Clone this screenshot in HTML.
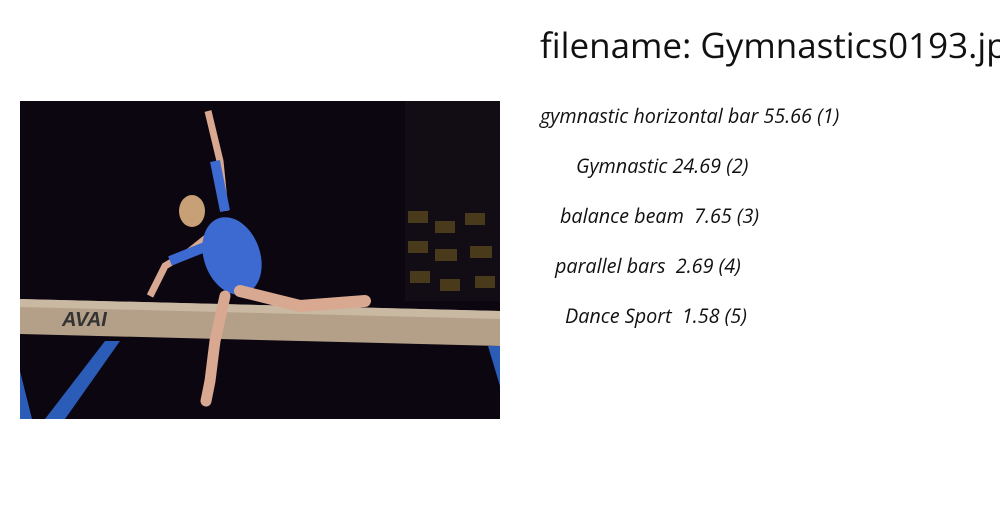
<!DOCTYPE html>
<html><head><meta charset="utf-8"><style>
body{margin:0;width:1000px;height:520px;background:#fff;overflow:hidden;position:relative;font-family:"Open Sans","DejaVu Sans","Liberation Sans",sans-serif;color:#111}
h1{position:absolute;left:540px;top:22px;margin:0;font-weight:normal;font-size:35px;white-space:nowrap}
.l{position:absolute;font-style:italic;font-size:19.8px;white-space:nowrap}
svg{position:absolute;left:20px;top:101px}
</style></head><body>
<svg width="480" height="318" viewBox="0 0 480 318">
<rect width="480" height="318" fill="#0c0610"/>
<rect x="385" y="0" width="95" height="200" fill="#120c15"/>
<g fill="#4a3a1c">
<rect x="388" y="110" width="20" height="12"/><rect x="415" y="120" width="20" height="12"/><rect x="445" y="112" width="20" height="12"/>
<rect x="388" y="140" width="20" height="12"/><rect x="415" y="148" width="22" height="12"/><rect x="450" y="145" width="22" height="12"/>
<rect x="390" y="170" width="20" height="12"/><rect x="420" y="178" width="20" height="12"/><rect x="455" y="175" width="20" height="12"/>
</g>
<polygon points="85,240 100,240 45,318 25,318" fill="#2a5cb8"/>
<polygon points="0,270 12,318 0,318" fill="#2a5cb8"/>
<polygon points="468,245 480,245 480,285" fill="#2a5cb8"/>
<polygon points="0,198 480,210 480,245 0,233" fill="#b4a089"/>
<polygon points="0,198 480,210 480,218 0,206" fill="#c9b8a2"/>
<text x="42" y="225" font-family="Liberation Sans" font-weight="bold" font-style="italic" font-size="20" fill="#333">AVAI</text>
<path d="M195,130 L170,150 L145,165 L130,195" stroke="#d8a890" stroke-width="7" fill="none"/>
<path d="M200,140 L150,160" stroke="#3c6ad0" stroke-width="10"/>
<path d="M188,10 L200,60 L205,110" stroke="#d8a890" stroke-width="7" fill="none"/>
<path d="M195,60 L205,110" stroke="#3c6ad0" stroke-width="10"/>
<ellipse cx="212" cy="155" rx="28" ry="40" fill="#3c6ad0" transform="rotate(-20 212 155)"/>
<ellipse cx="172" cy="110" rx="13" ry="16" fill="#c8a078"/>
<path d="M220,190 L280,205 L345,200" stroke="#d8a890" stroke-width="12" fill="none" stroke-linecap="round"/>
<path d="M205,195 L195,240 L190,280 L186,300" stroke="#d8a890" stroke-width="11" fill="none" stroke-linecap="round"/>
</svg>
<h1>filename: Gymnastics0193.jpg</h1>
<div class="l" style="left:540px;top:102px">gymnastic horizontal bar 55.66 (1)</div>
<div class="l" style="left:576px;top:152px">Gymnastic 24.69 (2)</div>
<div class="l" style="left:560px;top:202px">balance beam&nbsp; 7.65 (3)</div>
<div class="l" style="left:555px;top:252px">parallel bars&nbsp; 2.69 (4)</div>
<div class="l" style="left:565px;top:302px">Dance Sport&nbsp; 1.58 (5)</div>
</body></html>
